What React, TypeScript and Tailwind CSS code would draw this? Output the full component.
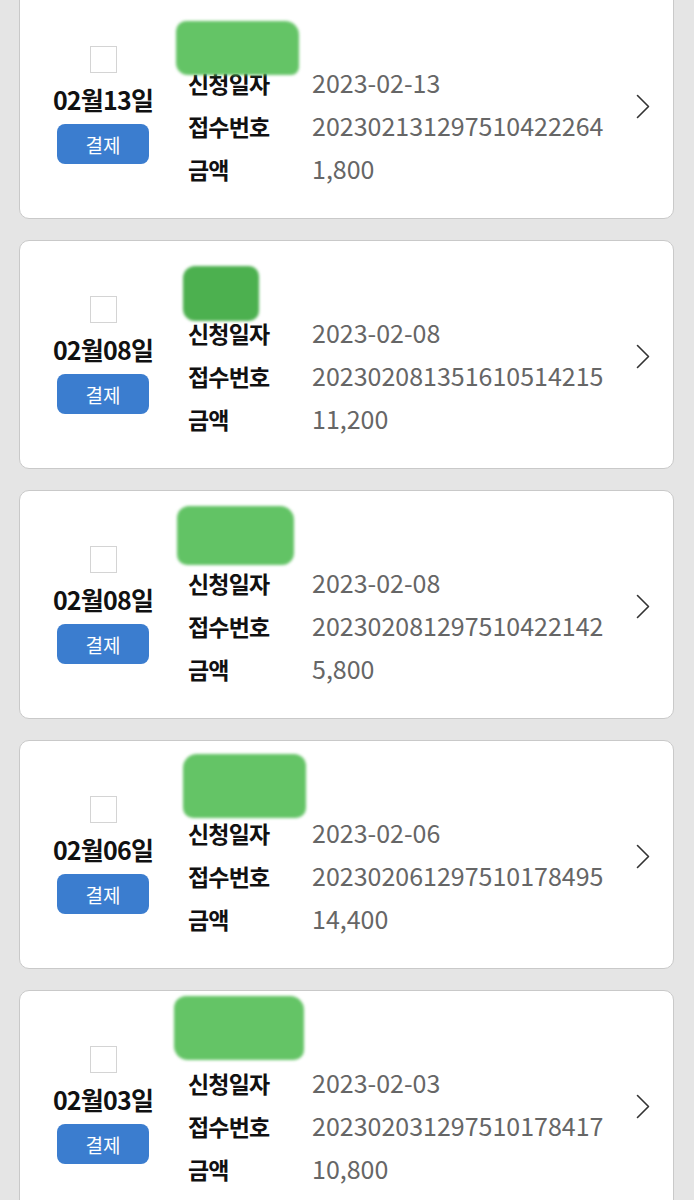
import React from "react";

type Item = {
  day: string;
  date: string;
  no: string;
  amount: string;
  blob: { left: number; top: number; w: number; h: number; color: string; r: string };
};

const items: Item[] = [
  { day: "02월13일", date: "2023-02-13", no: "20230213129751042226" + "4", amount: "1,800", blob: { left: 156, top: 30, w: 123, h: 54, color: "#64c466", r: "10px 14px 8px 12px" } },
  { day: "02월08일", date: "2023-02-08", no: "20230208135161051421" + "5", amount: "11,200", blob: { left: 163, top: 25, w: 76, h: 55, color: "#4cb04f", r: "12px 10px 10px 12px" } },
  { day: "02월08일", date: "2023-02-08", no: "20230208129751042214" + "2", amount: "5,800", blob: { left: 157, top: 15, w: 117, h: 59, color: "#62c365", r: "12px 14px 12px 10px" } },
  { day: "02월06일", date: "2023-02-06", no: "20230206129751017849" + "5", amount: "14,400", blob: { left: 163, top: 13, w: 123, h: 64, color: "#64c466", r: "14px 12px 10px 10px" } },
  { day: "02월03일", date: "2023-02-03", no: "20230203129751017841" + "7", amount: "10,800", blob: { left: 154, top: 5, w: 130, h: 64, color: "#64c466", r: "12px 14px 10px 14px" } },
];

const font = { fontFamily: '"Noto Sans CJK KR", "Noto Sans", sans-serif' };

function Card({ it }: { it: Item }) {
  return (
    <div className="relative flex h-[229px] items-center rounded-[10px] border border-[#c9c9c9] bg-white">
      <div className="flex w-[166px] flex-col items-center pt-[1px]">
        <div className="h-[27px] w-[27px] border border-[#d4d4d4] bg-white" />
        <div className="mt-[9px] text-[25px] font-bold leading-[34px] tracking-[-0.8px] text-[#111]">{it.day}</div>
        <div className="mt-[8px] flex h-[40px] w-[92px] items-center justify-center rounded-[8px] bg-[#3b7dcf] text-[19px] leading-none text-white">
          결제
        </div>
      </div>
      <div className="flex flex-col pl-[2px]">
        <div className="h-[43px]" />
        {[
          ["신청일자", it.date],
          ["접수번호", it.no],
          ["금액", it.amount],
        ].map(([k, v]) => (
          <div key={k} className="flex h-[43px] items-center">
            <div className="w-[124px] text-[23px] font-bold tracking-[-0.8px] text-[#111]">{k}</div>
            <div className="text-[25px] text-[#666]">{v}</div>
          </div>
        ))}
      </div>
      <svg className="absolute right-[23px] top-[103px]" width="14" height="25" viewBox="0 0 14 25" fill="none">
        <path d="M1.5 1.5 L12.5 12.5 L1.5 23.5" stroke="#333" strokeWidth="1.6" strokeLinecap="round" strokeLinejoin="round" />
      </svg>
      <div
        className="absolute blur-[1.5px]"
        style={{ left: it.blob.left, top: it.blob.top, width: it.blob.w, height: it.blob.h, background: it.blob.color, borderRadius: it.blob.r }}
      />
    </div>
  );
}

export default function App() {
  return (
    <div className="h-[1200px] overflow-hidden bg-[#e5e5e5]" style={font}>
      <div className="-mt-[10px] flex flex-col gap-[21px] pl-[19px] pr-[20px]">
        {items.map((it, i) => (
          <Card key={i} it={it} />
        ))}
      </div>
    </div>
  );
}
